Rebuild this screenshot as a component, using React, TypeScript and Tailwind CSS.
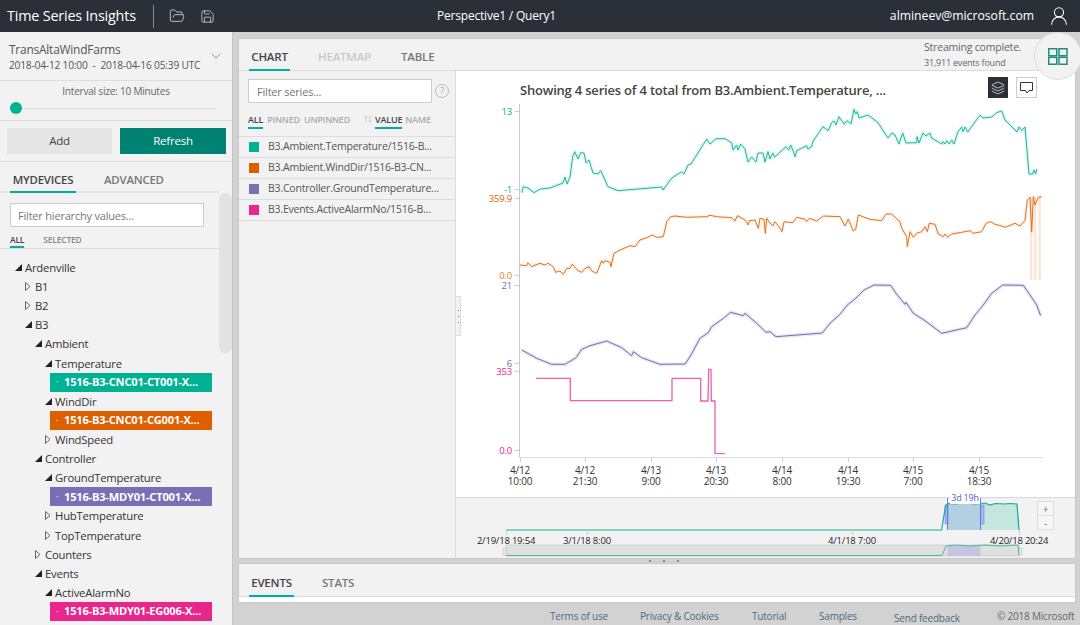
import React from 'react';
import { ChevronDown, FolderOpen, Save, UserRound, Layers, ArrowUpDown } from 'lucide-react';

const TEAL = '#00b294';
const ORANGE = '#dd5f00';
const PURPLE = '#7a6fb5';
const PINK = '#e8268c';

const pts = (a: number[]) => {
    const out: string[] = [];
    for (let i = 0; i < a.length; i += 2) out.push(`${a[i]},${a[i + 1]}`);
    return out.join(' ');
};

const tealLine = [521.7,192.7,523.3,186.7,528,188,534,192.7,540,189,550,188,563,183,565,177,567,184,570,177,572.7,156.7,574.7,151.7,578,159,580.7,152.7,584,153,586,162.7,589,160,593,173,598,174,600.7,170.7,608,186.7,618,190.7,661.7,187,663,190,671.7,178,681.7,171.7,684,174,688,165,691,164,706.7,139,710,144,716,138.7,725,138.7,731.7,142.7,733,150,736.7,145,738,150,740.7,144,745,149,748,162,751.7,157,756,162,758,153,763,153,765,162,768,151.7,770,159,772.7,153,774.7,157,786,146.7,788.7,150,790.7,145,793,150.7,795,156.7,796.7,150.7,806.7,145.7,808,149,811.7,146.7,812.7,141.7,823,126.7,828,130.7,831.7,122.7,834,121,836,125,839,116.7,844,124,847,120.7,851,124,854,109.3,855.7,114,857.3,111.7,859,118,868,115,878,122.7,888,138,892,133,895,135,899,144,902.7,133,906,143,916.7,142.7,917,136.7,919,143,923,133,926,136,930,133,931.7,138,941.7,144,943,141.7,945,144,946.7,140.7,949,144,951.7,140,954,144,958,131.7,961.7,127,963,131.7,965,127,967.7,132,980,115,983,118,991.7,117,996.7,112.7,1001.7,111,1005,120,1017,132,1019,127,1021.7,130.7,1025,127,1029,174,1032.7,174,1034,170,1035.7,174,1036.7,169];

const orangeLine = [520,265,526.7,265.7,528,262.7,531.7,266.7,540,263.3,545,265,548,263.3,553.3,266.7,555.7,272.3,560,271,563.3,274.3,566.7,268.3,570,268.3,572.3,264,578.3,271,581.7,272.3,585,268.3,589,266.7,591.7,271,596.7,273.3,601.7,260.7,603.3,263.3,605,260.7,610,262.3,611,266.7,614,253.3,620,250,630,245.7,635,246.7,640,240,646.7,237.7,652.3,235,656.7,237.3,663.3,236.7,666.7,221.7,670.7,216.7,675,216,686.7,217.3,706.7,216.7,710,215.3,716.7,216.7,731.7,217.7,735,221,737.3,215.7,745,220,748.3,225,749.3,220.7,755,220,758.3,228.3,760,218.3,764,219.3,765.3,233.3,766.7,218.3,770,223,772.7,226,775,221.7,780,228.3,782,231.7,784,221.7,792.7,222.7,796.7,217.3,805,219.3,806.7,221.7,809.3,218.3,816.7,221,823.3,216,840,216.7,845,226,848.3,219,853.3,231,855.7,229.3,858.3,215,870,219.3,881.7,220.7,886,214,891.7,214,900,221.7,901.7,228.3,906.7,236.7,907.3,246.7,910,231.7,913.3,237.3,916.7,233.3,921.7,231.7,925,226.7,927.3,231.7,929.3,223.3,935,224.3,938.3,234,943.3,236.7,945,234,947.7,237.3,951.7,234,961.7,232.3,970,230.7,973.3,233.3,981.7,231.7,986,223.3,990.7,221.7,995,224.3,1001.7,226,1005,227.3,1015,223.3,1020,226,1025,220.7,1027.3,200,1030,197.3,1031.7,231.7,1033.3,196.7,1035,205,1038.3,197.3,1041.7,196.7];

const purpleLine = [521.7,350,536.7,358.3,551.7,364.3,565,364.3,576,357.7,581.7,349.3,590,345.7,606.7,341,621.7,347.7,631.7,355.7,633.3,351.7,641.7,357.7,660,364.3,685,364,690,356.7,700,338.3,708.3,332.7,711.7,326.7,723.3,318.3,730.7,312.3,743.3,315.7,745,313.3,756.7,323.3,766,332.3,770,331.7,776,336.7,822.3,333,830,323.3,840,314.3,847.3,305,855,299,864,290,874,285,890.7,285.3,896,293.3,905,304.3,906,302.3,913.3,313.3,925,320.7,941.7,333.3,966.7,327.7,975,315,983.3,305,991.7,293.3,1002.7,285,1023.3,285.3,1030,295,1036.7,305,1040.7,315.7];

const pinkLine = [536,378.3,570.3,378.3,570.3,400.7,672,400.7,672,378.3,700.7,378.3,700.7,401,708,401,708.7,369.3,711,369.3,711.3,401,715,401,715,453.3,724.7,453.7];

const brushLine = [506,530,941.6,530,945.5,506,948,503.5,955,504,965,503,975,504,985,503,990,505,995,503.5,1005,504,1010,503.5,1017,504,1019,530];
const miniLine = [506,555.5,942,555.5,946,546,955,545,970,546,985,545,1000,546,1018,545,1019,555];

const Series = ({ d, color, band }: { d: number[]; color: string; band: number }) => (
    <>
        <polyline points={pts(d)} fill="none" stroke={color} strokeOpacity={band} strokeWidth={3.5} strokeLinejoin="round" />
        <polyline points={pts(d)} fill="none" stroke={color} strokeWidth={1} strokeLinejoin="round" />
    </>
);

const yLabels: [string, number, string][] = [
    ['13', 111, '#00b294'],
    ['-1', 189, '#00b294'],
    ['359.9', 198, '#dd5f00'],
    ['0.0', 275, '#e08a20'],
    ['21', 285, '#7a6fb5'],
    ['6', 363, '#7a6fb5'],
    ['353', 371, '#e8268c'],
    ['0.0', 450, '#e8268c'],
];

const xLabels: [string, string, number][] = [
    ['4/12', '10:00', 520],
    ['4/12', '21:30', 585],
    ['4/13', '9:00', 651],
    ['4/13', '20:30', 716],
    ['4/14', '8:00', 782],
    ['4/14', '19:30', 848],
    ['4/15', '7:00', 913],
    ['4/15', '18:30', 979],
];

const ChartSvg = () => (
    <svg viewBox="456 71 620 426" className="w-[620px] h-[426px] block">
        {/* axes */}
        <line x1="519.5" y1="104" x2="519.5" y2="457" stroke="#c8c8c8" />
        <line x1="519" y1="457.5" x2="1043" y2="457.5" stroke="#e0e0e0" />
        {yLabels.map(([t, y, c], i) => (
            <g key={i}>
                <line x1="515" y1={y + 0.5} x2="519" y2={y + 0.5} stroke="#c8c8c8" />
                <text x="512" y={y + 3.5} textAnchor="end" fontSize="9.5" fill={c}>{t}</text>
            </g>
        ))}
        {xLabels.map(([a, b, x], i) => (
            <g key={i}>
                <line x1={x + 0.5} y1="457" x2={x + 0.5} y2="462" stroke="#d0d0d0" />
                <text x={x} y="474" textAnchor="middle" fontSize="10" fill="#333">{a}</text>
                <text x={x} y="485" textAnchor="middle" fontSize="10" fill="#333">{b}</text>
            </g>
        ))}
        <rect x="1030" y="197" width="2.4" height="83" fill={ORANGE} opacity="0.16" />
        <rect x="1034" y="197" width="2.4" height="83" fill={ORANGE} opacity="0.16" />
        <rect x="1038.5" y="197" width="2.4" height="83" fill={ORANGE} opacity="0.16" />
        <Series d={tealLine} color="#1fb99d" band={0.14} />
        <Series d={orangeLine} color="#e2701c" band={0.08} />
        <Series d={purpleLine} color={PURPLE} band={0.18} />
        <polyline points={pts(pinkLine)} fill="none" stroke="#f25cab" strokeWidth={1.3} />
    </svg>
);

const BrushSvg = () => (
    <svg viewBox="456 498 620 61" className="w-[620px] h-[61px] block">
        <polygon points={pts([980, 530, 980, 504, 985, 503, 990, 505, 995, 503.5, 1005, 504, 1010, 503.5, 1017, 504, 1019, 530])} fill="#c3e6de" />
        <rect x="947.5" y="504" width="33" height="26" fill="#b2d0e2" />
        <rect x="945" y="505" width="3" height="19" fill="#a9b8ec" stroke="#5d78e0" strokeWidth="0.5" />
        <rect x="980.5" y="505" width="3.5" height="19" fill="#a9b8ec" stroke="#5d78e0" strokeWidth="0.5" />
        <line x1="947.5" y1="498" x2="947.5" y2="530" stroke="#4a6de5" strokeWidth="0.8" />
        <line x1="980.5" y1="498" x2="980.5" y2="530" stroke="#4a6de5" strokeWidth="0.8" />
        <polyline points={pts(brushLine)} fill="none" stroke="#14ac91" strokeWidth={1.2} />
        {[506, 587, 852, 1019].map((x) => (
            <line key={x} x1={x + 0.5} y1="530" x2={x + 0.5} y2="535" stroke="#ccc" />
        ))}
        <text x="506" y="544" textAnchor="middle" fontSize="9.5" fill="#222">2/19/18 19:54</text>
        <text x="587" y="544" textAnchor="middle" fontSize="9.5" fill="#222">3/1/18 8:00</text>
        <text x="852" y="544" textAnchor="middle" fontSize="9.5" fill="#222">4/1/18 7:00</text>
        <text x="1019" y="544" textAnchor="middle" fontSize="9.5" fill="#222">4/20/18 20:24</text>
        {/* mini overview */}
        <rect x="503" y="548" width="3" height="7" fill="#ececec" stroke="#bbb" strokeWidth="0.5" />
        <rect x="1019" y="548" width="3" height="7" fill="#ececec" stroke="#bbb" strokeWidth="0.5" />
        <rect x="506" y="545" width="513" height="11" fill="#dfe1df" stroke="#c4c4c4" strokeWidth="0.6" />
        <rect x="947.5" y="546" width="33" height="10" fill="#c6c6e2" />
        <polyline points={pts(miniLine)} fill="none" stroke="#4fb4a0" strokeWidth={1} />
    </svg>
);

const Expanded = () => (
    <svg width="7" height="7" viewBox="0 0 7 7" className="shrink-0"><polygon points="7,0 7,7 0,7" fill="#222" /></svg>
);
const Collapsed = () => (
    <svg width="6" height="9" viewBox="0 0 6 9" className="shrink-0"><polygon points="0.5,0.5 5,4.5 0.5,8.5" fill="none" stroke="#666" /></svg>
);

const TreeRow = ({ label, depth, open }: { label: string; depth: number; open: boolean }) => (
    <div className="h-[19.12px] flex items-center" style={{ paddingLeft: 15 + depth * 10 }}>
        <span className="w-[10px] flex justify-start">{open ? <Expanded /> : <Collapsed />}</span>
        <span className="text-[11.3px] leading-[19px] text-[#333]">{label}</span>
    </div>
);

const TreeLeaf = ({ label, color }: { label: string; color: string }) => (
    <div className="h-[19.12px] ml-[50px] w-[162px] flex items-center text-white text-[11.1px] font-bold whitespace-nowrap overflow-hidden" style={{ backgroundColor: color }}>
        <span className="w-[14px] text-center text-[9px] font-normal">·</span>
        <span>{label}</span>
    </div>
);

const seriesRows = [
    { name: 'B3.Ambient.Temperature/1516-B...', color: TEAL },
    { name: 'B3.Ambient.WindDir/1516-B3-CN...', color: ORANGE },
    { name: 'B3.Controller.GroundTemperature...', color: PURPLE },
    { name: 'B3.Events.ActiveAlarmNo/1516-B...', color: PINK },
];

const App = () => {
    return (
        <div className="w-[1080px] h-[625px] overflow-hidden relative flex flex-col bg-[#d2d2d2] font-['Open_Sans',sans-serif] tracking-[-0.2px]">
            {/* top bar */}
            <header className="h-8 shrink-0 bg-[#2b3038] text-white flex items-center">
                <span className="ml-[7px] text-[14.4px] w-[139px] whitespace-nowrap">Time Series Insights</span>
                <span className="ml-[7px] w-px h-[23px] bg-[#8a8d92]" />
                <FolderOpen size={16} strokeWidth={1.2} className="ml-[15px] text-[#ddd]" />
                <Save size={15} strokeWidth={1.2} className="ml-[15px] text-[#ddd]" />
                <span className="absolute left-[437px] text-[12px]">Perspective1 / Query1</span>
                <span className="ml-auto text-[12.2px] tracking-normal">almineev@microsoft.com</span>
                <UserRound size={22} strokeWidth={1.2} className="ml-[14px] mr-[10px]" />
            </header>

            <div className="flex-1 flex min-h-0">
                {/* left panel */}
                <aside className="w-[233px] shrink-0 bg-[#f2f2f2] border-r border-[#c4c4c4] relative overflow-hidden">
                    <div className="h-[49px] border-b border-[#ddd] pl-[9px] pr-[8px] pt-[9px] flex justify-between">
                        <div>
                            <div className="text-[11.9px] leading-[17px] text-[#555]">TransAltaWindFarms</div>
                            <div className="text-[10.2px] leading-[15px] text-[#555] whitespace-pre">2018-04-12 10:00  -  2018-04-16 05:39 UTC</div>
                        </div>
                        <ChevronDown size={16} strokeWidth={1} className="text-[#666] mt-[7px]" />
                    </div>
                    <div className="h-[40px] border-b border-[#ddd] flex flex-col items-center">
                        <div className="text-[10px] leading-[14px] mt-[3px] text-[#666]">Interval size: 10 Minutes</div>
                        <div className="w-full flex items-center pl-[10px] mt-[4px]">
                            <span className="w-3 h-3 rounded-full bg-[#00b294] shrink-0" />
                            <span className="w-[194px] h-px bg-[#ddd]" />
                        </div>
                    </div>
                    <div className="h-[41px] border-b border-[#ddd] flex items-start pt-[7px] pl-[7px] gap-[8px]">
                        <button className="w-[105px] h-[26px] bg-[#e6e6e6] text-[11.5px] text-[#444]">Add</button>
                        <button className="w-[106px] h-[26px] bg-[#008272] text-[11.5px] text-white">Refresh</button>
                    </div>
                    <div className="h-[31px] w-[219px] border-b-2 border-[#e4e4e4] flex pl-[10px] text-[11.4px] font-semibold">
                        <div className="w-[66px] h-[31px] border-b-2 border-[#00b294] text-[#444] text-center leading-[36px]">MYDEVICES</div>
                        <div className="ml-[28px] text-[#777] leading-[36px]">ADVANCED</div>
                    </div>
                    <div className="w-[219px]">
                        <div className="pl-[10px] pt-[10px]">
                            <input readOnly placeholder="Filter hierarchy values..." className="block w-[194px] h-[24px] bg-white border border-[#ccc] px-[7px] text-[11px] placeholder:text-[#777] outline-none" />
                        </div>
                        <div className="h-[22px] border-b border-[#ddd] flex pl-[10px] text-[8.5px] font-semibold">
                            <div className="h-[21px] border-b-2 border-[#00b294] text-[#444] leading-[26px]">ALL</div>
                            <div className="ml-[19px] text-[#888] leading-[26px]">SELECTED</div>
                        </div>
                    </div>
                    <div className="pt-[9px] w-[219px]">
                        <TreeRow label="Ardenville" depth={0} open />
                        <TreeRow label="B1" depth={1} open={false} />
                        <TreeRow label="B2" depth={1} open={false} />
                        <TreeRow label="B3" depth={1} open />
                        <TreeRow label="Ambient" depth={2} open />
                        <TreeRow label="Temperature" depth={3} open />
                        <TreeLeaf label="1516-B3-CNC01-CT001-X..." color={TEAL} />
                        <TreeRow label="WindDir" depth={3} open />
                        <TreeLeaf label="1516-B3-CNC01-CG001-X..." color={ORANGE} />
                        <TreeRow label="WindSpeed" depth={3} open={false} />
                        <TreeRow label="Controller" depth={2} open />
                        <TreeRow label="GroundTemperature" depth={3} open />
                        <TreeLeaf label="1516-B3-MDY01-CT001-X..." color={PURPLE} />
                        <TreeRow label="HubTemperature" depth={3} open={false} />
                        <TreeRow label="TopTemperature" depth={3} open={false} />
                        <TreeRow label="Counters" depth={2} open={false} />
                        <TreeRow label="Events" depth={2} open />
                        <TreeRow label="ActiveAlarmNo" depth={3} open />
                        <TreeLeaf label="1516-B3-MDY01-EG006-X..." color={PINK} />
                    </div>
                    {/* scrollbar */}
                    <div className="absolute left-[219px] top-[161px] w-[13px] h-[160px] rounded-md bg-[#e2e2e2]" />
                </aside>

                {/* right side */}
                <main className="flex-1 min-w-0 flex flex-col">
                    <div className="mt-[6px] ml-[5px] mr-[4px] h-[521px] bg-[#f2f2f2] border border-[#c8c8c8] flex flex-col">
                        {/* tab strip */}
                        <div className="h-[32px] shrink-0 border-b border-[#dcdcdc] flex pl-[10px] text-[11.5px] font-semibold">
                            <div className="w-[41px] h-[32px] border-b-2 border-[#00b294] text-[#444] text-center leading-[36px]">CHART</div>
                            <div className="ml-[28px] text-[#c8c8c8] leading-[36px]">HEATMAP</div>
                            <div className="ml-[30px] text-[#777] leading-[36px]">TABLE</div>
                            <div className="ml-auto mr-[41px] w-[110px] font-normal pt-[1px]">
                                <div className="text-[10.5px] leading-[15px] text-[#666]">Streaming complete.</div>
                                <div className="text-[9px] leading-[15px] text-[#666]">31,911 events found</div>
                            </div>
                        </div>
                        <div className="flex flex-1 min-h-0">
                            {/* series list */}
                            <div className="w-[217px] shrink-0 border-r border-[#dcdcdc]">
                                <div className="flex items-center pl-[9px] pt-[8px]">
                                    <input readOnly placeholder="Filter series..." className="w-[184px] h-[24px] bg-white border border-[#ccc] px-[8px] text-[11px] placeholder:text-[#777] outline-none" />
                                    <span className="ml-[3px] w-[14px] h-[14px] rounded-full border border-[#bbb] text-[#aaa] text-[9px] leading-[12px] text-center">?</span>
                                </div>
                                <div className="h-[34px] border-b border-[#ddd] flex pl-[9px] text-[9px] font-semibold">
                                    <div className="h-[26px] border-b-2 border-[#00b294] text-[#444] leading-[33px]">ALL</div>
                                    <div className="ml-[4px] text-[#aaa] leading-[33px]">PINNED</div>
                                    <div className="ml-[4px] text-[#aaa] leading-[33px]">UNPINNED</div>
                                    <ArrowUpDown size={10} strokeWidth={1} className="ml-[13px] mt-[11px] text-[#aaa]" />
                                    <div className="ml-[2px] h-[26px] border-b-2 border-[#00b294] text-[#444] leading-[33px]">VALUE</div>
                                    <div className="ml-[3px] text-[#aaa] leading-[33px]">NAME</div>
                                </div>
                                {seriesRows.map((r) => (
                                    <div key={r.name} className="h-[21px] border-b border-[#ddd] flex items-center pl-[10px] text-[10.5px] text-[#555] whitespace-nowrap">
                                        <span className="w-[10px] h-[10px] shrink-0" style={{ backgroundColor: r.color }} />
                                        <span className="ml-[9px]">{r.name}</span>
                                    </div>
                                ))}
                            </div>
                            {/* chart */}
                            <div className="flex-1 min-w-0 flex flex-col relative overflow-hidden">
                                <div className="flex-1 min-h-0 bg-white relative">
                                    <div className="absolute left-[64px] top-[10px] text-[13px] font-semibold text-[#444] whitespace-nowrap">Showing 4 series of 4 total from B3.Ambient.Temperature, ...</div>
                                    <ChartSvg />
                                    <div className="absolute left-[532px] top-[6px] w-[20px] h-[21px] bg-[#2b3038] flex items-center justify-center">
                                        <Layers size={14} strokeWidth={1.2} className="text-white" />
                                    </div>
                                    <div className="absolute left-[560px] top-[6px] w-[21px] h-[21px] bg-white border border-[#ccc] flex items-center justify-center">
                                        <svg width="13" height="12" viewBox="0 0 13 12" fill="none" stroke="#333" strokeWidth="1"><path d="M0.5 0.5h12v8h-3.5l-2 2.5-1.5-2.5h-5z" /></svg>
                                    </div>
                                </div>
                                <div className="h-[61px] shrink-0 border-t border-[#d8d8d8] relative">
                                    <BrushSvg />
                                    <div className="absolute left-[581px] top-[3px] w-[17px] h-[29px] flex flex-col border border-[#ddd] bg-[#f6f6f6] text-[10px] text-[#777] text-center leading-[14px]">
                                        <span className="h-[14px] border-b border-[#ddd]">+</span>
                                        <span className="h-[14px]">-</span>
                                    </div>
                                </div>
                                <div className="absolute left-[494px] top-[420px] w-[30px] h-[13px] bg-white text-[9px] leading-[13px] text-center text-[#5a5ae0]">3d 19h</div>
                                {/* collapse handle */}
                                <div className="absolute left-0 top-[225px] w-[5px] h-[40px] bg-[#f2f2f2] border border-[#ddd] border-l-0 flex flex-col items-center justify-center gap-[5px]">
                                    <span className="w-px h-px bg-[#777]" />
                                    <span className="w-px h-px bg-[#777]" />
                                    <span className="w-px h-px bg-[#777]" />
                                </div>
                            </div>
                        </div>
                    </div>

                    {/* splitter */}
                    <div className="h-[5px] shrink-0 flex justify-center items-center gap-[12px] pl-[15px] -mt-[1px]">
                        <span className="w-[2px] h-[2px] bg-[#888]" />
                        <span className="w-[2px] h-[2px] bg-[#888]" />
                        <span className="w-[2px] h-[2px] bg-[#888]" />
                    </div>

                    {/* events pane */}
                    <div className="ml-[5px] mr-[4px] h-[40px] bg-[#f2f2f2] border border-[#c8c8c8] flex flex-col">
                        <div className="h-[33px] shrink-0 border-b border-[#dcdcdc] flex pl-[10px] text-[11.5px] font-semibold">
                            <div className="w-[45px] h-[33px] border-b-2 border-[#00b294] text-[#444] text-center leading-[38px]">EVENTS</div>
                            <div className="ml-[28px] text-[#777] leading-[38px]">STATS</div>
                        </div>
                        <div className="flex-1 bg-white" />
                    </div>

                    {/* footer */}
                    <footer className="h-[22px] shrink-0 flex text-[10px] text-[#4d6b80] leading-[27px] whitespace-nowrap">
                        <span className="ml-[317px] w-[90px]">Terms of use</span>
                        <span className="w-[112px]">Privacy &amp; Cookies</span>
                        <span className="w-[67px]">Tutorial</span>
                        <span className="w-[75px]">Samples</span>
                        <span className="w-[103px] leading-[30px]">Send feedback</span>
                        <span className="text-[#666]">© 2018 Microsoft</span>
                    </footer>
                </main>
            </div>

            {/* round dashboard button overlapping the header */}
            <div className="absolute left-[1034px] top-[32px] w-[48px] h-[48px] rounded-full bg-[#f2f2f2] border border-[#ddd] flex items-center justify-center">
                <svg width="20" height="17" viewBox="0 0 20 17" fill="none" stroke="#1c8f7c" strokeWidth="1.5">
                    <rect x="0.75" y="0.75" width="8" height="7" />
                    <rect x="11" y="0.75" width="8" height="7" />
                    <rect x="0.75" y="9.25" width="8" height="7" />
                    <rect x="11" y="9.25" width="8" height="7" />
                </svg>
            </div>
        </div>
    );
};

export default App;
